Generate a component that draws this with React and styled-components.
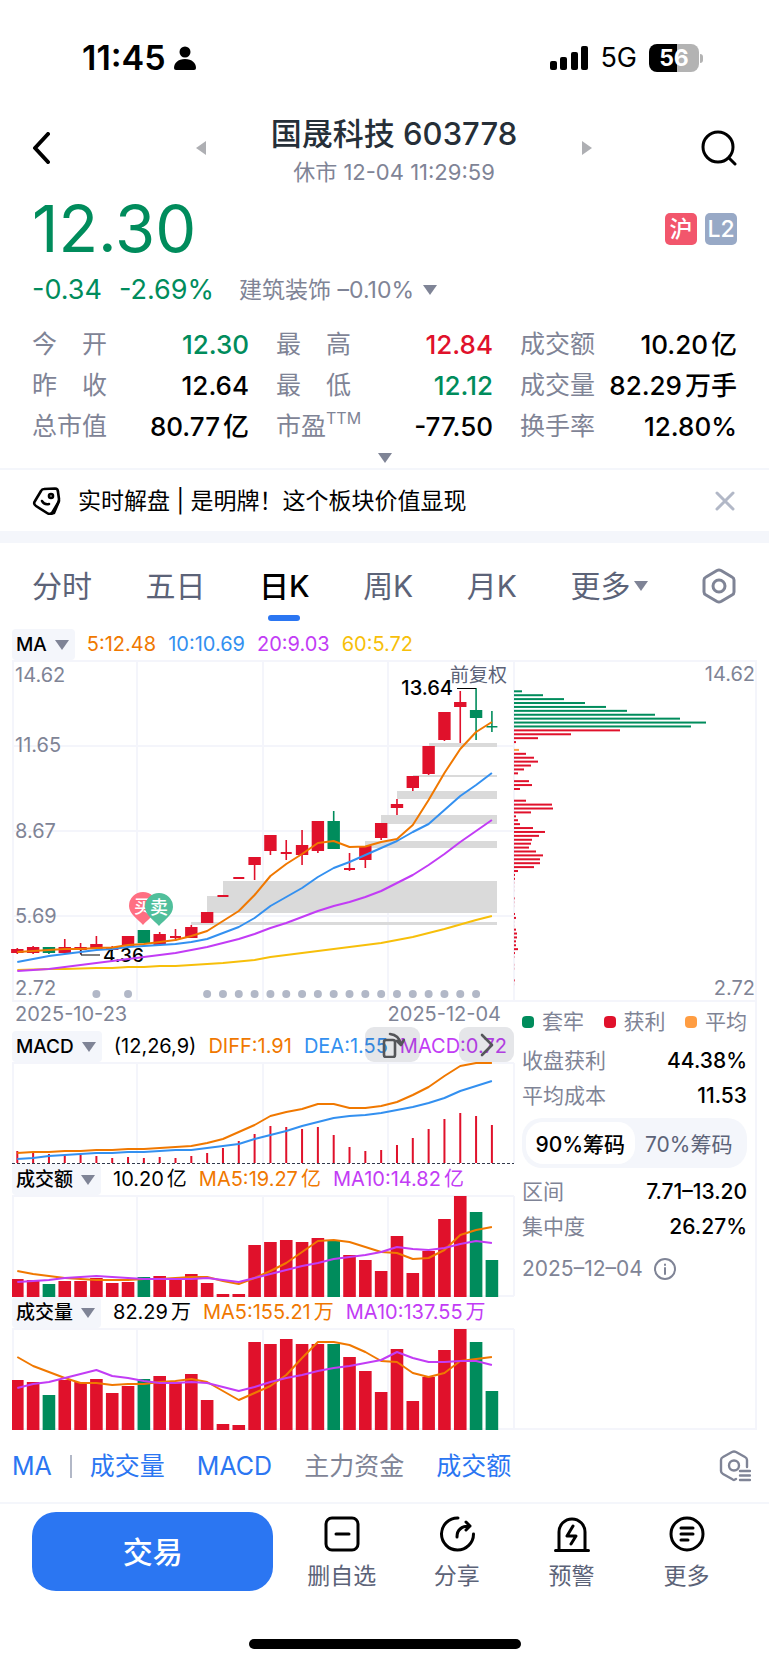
import React, { useState } from 'react';
import styled, { createGlobalStyle, ThemeProvider } from 'styled-components';

const theme = {
  fontFamily: 'Inter, "Noto Sans CJK SC", sans-serif',
  colors: {
    up: '#e0112b',
    down: '#008c5c',
    text: '#000000',
    title: '#262f38',
    tab: '#5c6378',
    muted: '#7f8496',
    faint: '#b2b8c7',
    line: '#f4f5fb',
    surface: '#f4f6fb',
    primary: '#2b76f2',
    orange: '#f07800',
    blue: '#3390f0',
    purple: '#c23cf5',
    yellow: '#f7bf0a',
    average: '#ff9d42',
    gap: '#dadada',
  },
};

const c = theme.colors;

const GlobalStyle = createGlobalStyle`
  * { box-sizing: border-box; }
  body { margin: 0; background: #fff; }
  button { border: 0; padding: 0; margin: 0; background: none; font: inherit; color: inherit; cursor: pointer; }
  dl, dt, dd, h1, p { margin: 0; font-weight: inherit; }
  svg { display: block; }
`;

const Page = styled.div`
  font-family: ${props => props.theme.fontFamily};
  color: ${props => props.theme.colors.text};
  background: #fff;
`;

/* status bar */

const StatusBar = styled.div`
  display: flex;
  align-items: center;
  justify-content: space-between;
  height: 110px;
  padding: 6px 66px 0 82px;
`;

const StatusGroup = styled.div`
  display: flex;
  align-items: center;
  gap: ${props => props.$gap}px;
`;

const Time = styled.span`
  font-size: 34px;
  line-height: 40px;
  font-weight: 600;
`;

const Network = styled.span`
  font-size: 27px;
  line-height: 40px;
`;

const Battery = styled.div`
  display: flex;
  align-items: center;
  gap: 1px;
`;

const BatteryBody = styled.div`
  width: 50px;
  height: 28px;
  border-radius: 8px;
  background: linear-gradient(to right, #000 56%, #b3b3b3 56%);
  color: #fff;
  font-size: 23px;
  line-height: 28px;
  font-weight: 700;
  text-align: center;
`;

const BatteryTip = styled.div`
  width: 3px;
  height: 9px;
  border-radius: 0 4px 4px 0;
  background: #b3b3b3;
`;

/* header */

const Header = styled.header`
  display: grid;
  grid-template-columns: 164px 1fr 145px;
  align-items: center;
  padding: 0 32px;
`;

const Switcher = styled.div`
  display: flex;
  align-items: center;
  justify-content: space-between;
`;

const TitleBlock = styled.div`
  text-align: center;
`;

const Title = styled.h1`
  font-size: 31px;
  line-height: 48px;
  font-weight: 500;
  color: ${props => props.theme.colors.title};
`;

const SubTitle = styled.p`
  font-size: 22px;
  line-height: 28px;
  color: ${props => props.theme.colors.muted};
`;

const SearchButton = styled.button`
  justify-self: end;
`;

/* quote */

const Quote = styled.section`
  padding: 0 32px;
`;

const PriceRow = styled.div`
  display: flex;
  align-items: center;
  justify-content: space-between;
`;

const Price = styled.div`
  font-size: 65px;
  line-height: 86px;
  color: ${props => props.theme.colors.down};
`;

const Badges = styled.div`
  display: flex;
  gap: 8px;
`;

const Badge = styled.span`
  width: 32px;
  height: 32px;
  border-radius: 5px;
  background: ${props => props.$color};
  color: #fff;
  font-size: 23px;
  line-height: 32px;
  font-weight: 500;
  text-align: center;
`;

const ChangeRow = styled.div`
  display: flex;
  align-items: center;
  gap: 17px;
  font-size: 27px;
  line-height: 36px;
  color: ${props => props.theme.colors.down};
`;

const Sector = styled.button`
  display: flex;
  align-items: center;
  gap: 9px;
  padding-left: 8px;
  font-size: 23px;
  color: ${props => props.theme.colors.muted};
`;

const Stats = styled.dl`
  display: grid;
  grid-template-columns: repeat(3, 1fr);
  column-gap: 27px;
  padding-top: 16px;
`;

const Stat = styled.div`
  display: flex;
  justify-content: space-between;
  line-height: 41px;
  font-size: 25px;
  white-space: pre;
`;

const StatLabel = styled.dt`
  display: flex;
  color: ${props => props.theme.colors.muted};
`;

const Sup = styled.sup`
  font-size: 16px;
  line-height: 24px;
`;

const StatValue = styled.dd`
  font-size: 26px;
  font-weight: 500;
  color: ${props => props.$color || props.theme.colors.text};
`;

const Unit = styled.span`
  margin-left: 3px;
`;

const ExpandButton = styled.button`
  display: flex;
  align-items: center;
  justify-content: center;
  width: 100%;
  height: 21px;
`;

const Triangle = styled.i`
  width: 0;
  height: 0;
  border: 7px solid transparent;
  border-top: 10px solid ${props => props.theme.colors.muted};
  border-bottom: 0;
`;

/* news */

const News = styled.div`
  display: flex;
  align-items: center;
  gap: 17px;
  height: 75px;
  padding: 0 34px 0 32px;
  border-top: 2px solid ${props => props.theme.colors.surface};
  border-bottom: 12px solid ${props => props.theme.colors.surface};
`;

const NewsText = styled.a`
  flex: 1;
  font-size: 23px;
  line-height: 32px;
  color: inherit;
  text-decoration: none;
`;

/* period tabs */

const Tabs = styled.nav`
  display: flex;
  align-items: center;
  justify-content: space-between;
  height: 86px;
  padding: 0 33px 0 32px;
`;

const Tab = styled.button`
  position: relative;
  display: flex;
  align-items: center;
  gap: 4px;
  height: 70px;
  font-size: 30px;
  line-height: 40px;
  font-weight: ${props => (props.$active ? 500 : 400)};
  color: ${props => (props.$active ? props.theme.colors.text : props.theme.colors.tab)};

  &::after {
    content: '';
    display: ${props => (props.$active ? 'block' : 'none')};
    position: absolute;
    left: 50%;
    bottom: 0;
    width: 32px;
    height: 6px;
    margin-left: -16px;
    border-radius: 3px;
    background: ${props => props.theme.colors.primary};
  }
`;

/* charts */

const ChartGrid = styled.main`
  display: grid;
  grid-template-columns: 502fr 243fr;
  padding: 0 12px;
`;

const MainColumn = styled.div`
  min-width: 0;
`;

const ChipColumn = styled.div`
  display: flex;
  flex-direction: column;
  padding-top: 31px;
`;

const Legend = styled.div`
  position: relative;
  display: flex;
  align-items: center;
  gap: 12px;
  height: 31px;
  font-size: 20px;
  line-height: 31px;
  white-space: nowrap;
`;

const IndicatorButton = styled.button`
  display: flex;
  align-items: center;
  gap: 8px;
  height: 31px;
  padding: 0 6px 0 4px;
  border-radius: 4px;
  background: ${props => props.theme.colors.surface};
  font-size: 19px;
  font-weight: 500;
`;

const LegendItem = styled.span`
  color: ${props => props.$color || props.theme.colors.text};
`;

const Overlay = styled.div`
  position: absolute;
  right: 0;
  top: -4px;
  display: flex;
  gap: 39px;
`;

const OverlayButton = styled.button`
  display: flex;
  align-items: center;
  justify-content: center;
  width: 55px;
  height: 35px;
  border-radius: 9px;
  background: rgba(70, 78, 98, 0.14);
`;

const Dates = styled.div`
  display: flex;
  justify-content: space-between;
  padding: 0 13px 4px 3px;
  font-size: 20px;
  line-height: 25px;
  color: ${props => props.theme.colors.muted};
`;

const Chart = styled.svg`
  width: 100%;
  height: auto;
  overflow: visible;
  font-family: ${props => props.theme.fontFamily};
`;

/* chip distribution panel */

const ChipPanel = styled.section`
  flex: 1;
  padding: 2px 8px 0;
  border: solid ${props => props.theme.colors.line};
  border-width: 0 2px 2px 0;
`;

const Keys = styled.div`
  display: flex;
  justify-content: space-between;
  margin-bottom: 3px;
  font-size: 21px;
  line-height: 36px;
  color: ${props => props.theme.colors.muted};
`;

const Key = styled.span`
  display: flex;
  align-items: center;
  gap: 8px;

  &::before {
    content: '';
    width: 12px;
    height: 12px;
    border-radius: 4px;
    background: ${props => props.$color};
  }
`;

const ChipRow = styled.div`
  display: flex;
  justify-content: space-between;
  font-size: 21px;
  line-height: 35px;
  color: ${props => props.theme.colors.muted};
`;

const ChipValue = styled.span`
  font-weight: 500;
  color: ${props => props.theme.colors.text};
`;

const Segment = styled.div`
  display: flex;
  height: 50px;
  margin: 5px 0 6px;
  padding: 4px;
  border-radius: 20px;
  background: ${props => props.theme.colors.surface};
`;

const SegmentButton = styled.button`
  flex: 1;
  border-radius: 17px;
  font-size: 21px;
  white-space: nowrap;
  font-weight: ${props => (props.$active ? 500 : 400)};
  color: ${props => (props.$active ? props.theme.colors.text : props.theme.colors.tab)};
  background: ${props => (props.$active ? '#fff' : 'none')};
`;

const ChipDate = styled.div`
  display: flex;
  align-items: center;
  gap: 11px;
  margin-top: 7px;
  font-size: 21px;
  line-height: 36px;
  color: ${props => props.theme.colors.muted};
`;

/* indicator bar */

const IndicatorBar = styled.div`
  display: flex;
  align-items: center;
  gap: 32px;
  height: 74px;
  padding: 0 18px 0 12px;
  border-bottom: 2px solid ${props => props.theme.colors.surface};
  font-size: 25px;
  line-height: 36px;

  & > :last-child {
    margin-left: auto;
  }
`;

const IndicatorMain = styled.div`
  display: flex;
  align-items: center;
  gap: 18px;
`;

const IndicatorItem = styled.button`
  color: ${props => (props.$on ? props.theme.colors.primary : props.theme.colors.muted)};
`;

const Separator = styled.i`
  width: 2px;
  height: 23px;
  background: ${props => props.theme.colors.faint};
`;

/* bottom bar */

const BottomBar = styled.footer`
  display: flex;
  align-items: flex-start;
  gap: 11px;
  padding: 8px 25px 0 32px;
`;

const TradeButton = styled.button`
  flex: 242;
  height: 79px;
  padding-bottom: 4px;
  border-radius: 24px;
  background: ${props => props.theme.colors.primary};
  color: #fff;
  font-size: 30px;
  font-weight: 500;
`;

const Actions = styled.div`
  flex: 461;
  display: grid;
  grid-template-columns: repeat(4, 1fr);
`;

const Action = styled.button`
  display: flex;
  flex-direction: column;
  align-items: center;
  gap: 6px;
  padding-top: 4px;
  font-size: 23px;
  line-height: 36px;
  color: ${props => props.theme.colors.tab};
`;

const HomeIndicator = styled.div`
  width: 272px;
  height: 10px;
  margin: 45px auto 16px;
  border-radius: 5px;
  background: #000;
`;

const STEP = 15.82;
const dayX = i => 5.3 + i * STEP;
const greenDays = [2, 8, 20, 29, 30];
const dayColor = i => (greenDays.includes(i) ? c.down : c.up);

// body top, body bottom, wick top, wick bottom
const candles = [
  [289, 293, 288, 294], [287, 293, 286, 294], [287, 293, 287, 294], [287, 293, 279, 293],
  [287, 290, 283, 294], [284, 289, 276, 289], [287, 290, 286, 291], [276, 286, 276, 286],
  [270, 283, 270, 283], [274, 285, 272, 286], [276, 278, 269, 281], [267, 278, 265, 278],
  [252, 263, 252, 263], [235, 237, 235, 237], [217, 219, 217, 219], [197, 205, 197, 220],
  [175, 191, 175, 195], [192, 194, 180, 200], [185, 195, 170, 205], [161, 191, 161, 193],
  [161, 189, 151, 189], [208, 210, 193, 211], [186, 200, 186, 208], [163, 178, 163, 180],
  [144, 148, 139, 155], [116, 128, 116, 131], [86, 114, 86, 115], [52, 80, 52, 81],
  [42, 47, 31, 83], [50, 58, 28, 80], [66, 67.500, 51, 72],
];

const ma5 = [292, 291, 290, 289, 289, 288, 287.5, 285, 284, 282, 280, 276, 271, 261, 251, 235, 216, 204, 194, 183, 181, 187, 186.5, 182, 179, 165, 140, 113, 89, 72, 62];
const ma10 = [302, 299, 296, 294, 292, 290, 289, 287, 286, 285, 284, 282, 279, 273, 267, 258, 246, 237, 228, 217, 208, 202, 195, 188, 181, 172, 164, 150, 136, 125, 113];
const ma20 = [311, 310, 309, 307, 305, 303, 301, 299, 297, 295, 293, 290, 287, 283, 279, 274, 268, 263, 257, 251, 246, 242, 237, 231, 223, 215, 205, 194, 182, 171, 160];
const ma60 = [310, 309.5, 309, 309, 308.5, 308, 308, 307, 307, 306, 306, 305, 304, 303, 301.5, 300, 297, 295, 293, 291, 289, 287, 285, 283, 280, 277, 273, 269, 264.5, 260, 256];

// left edge, top, height
const gaps = [
  [179, 262, 3], [195, 236, 17], [211, 221, 32], [353, 181, 7], [369, 155, 9],
  [385, 131, 8], [401, 115, 2], [417, 83, 4],
];

const eventDays = [5, 7, ...Array.from({ length: 18 }, (_, i) => i + 12)];

const priceLabels = [
  { y: 22, text: '14.62' },
  { y: 92, text: '11.65' },
  { y: 178, text: '8.67' },
  { y: 263, text: '5.69' },
  { y: 335, text: '2.72' },
];

const diff = [91, 90, 90, 89, 89, 88, 88, 87, 87, 86, 85, 84, 81, 77, 70, 63, 54, 50, 47, 42, 42, 46, 46, 44, 40, 33, 25, 14, 4, 1, 1];
const dea = [97, 96, 94, 93, 92, 91, 91, 90, 90, 89, 88, 88, 86, 84, 82, 77, 73, 69, 64, 60, 56, 54, 53, 51, 48, 45, 41, 36, 29, 24, 19];
const macd = [12, 11, 9, 8, 8, 7, 5, 6, 5, 6, 5, 7, 10, 15, 22, 29, 37, 36, 34, 36, 28, 16, 12, 13, 18, 25, 34, 44, 50, 47, 38];

const turnover = {
  bars: [18, 17, 13, 16, 16, 19, 14, 15, 20, 21, 19, 23, 14, 3, 3, 52, 55, 57, 55, 59, 57, 42, 37, 26, 61, 24, 46, 78, 101, 85, 37],
  ma5: [76, 79, 81, 83, 84, 85, 85, 85, 84, 84, 83, 82, 82, 86, 89, 83, 76, 68, 57, 46, 45, 47, 52, 57, 58, 64, 63, 55, 40, 35, 32],
  ma10: [87, 86, 85, 83, 82, 81, 82, 83, 84, 84, 84, 84, 83, 85, 87, 83, 79, 75, 71, 68, 64, 62, 60, 57, 52, 54, 55, 53, 49, 46, 48],
};

const volume = {
  bars: [50, 48, 35, 50, 48, 51, 37, 44, 51, 54, 48, 56, 30, 6, 5, 88, 86, 91, 86, 86, 86, 73, 59, 38, 81, 29, 53, 80, 101, 88, 39],
  ma5: [29, 38, 44, 50, 55, 55, 57, 56, 56, 54, 53, 51, 54, 63, 72, 65, 58, 47, 30, 14, 14, 17, 24, 33, 34, 45, 49, 45, 33, 31, 29],
  ma10: [60, 56, 54, 50, 46, 42, 48, 50, 53, 55, 55, 54, 55, 59, 63, 59, 54, 50, 47, 43, 40, 38, 35, 32, 24, 30, 34, 34, 33, 33, 37],
};

// chips held at each price level, highest price first
const chips = [
  8, 29, 50, 71, 92, 113, 141, 166, 192, 177, 106, 57, 24, 2, 0, 5, 12, 20, 24, 17, 10, 4, 0, 15, 18, 6, 0, 0,
  12, 38, 39, 17, 2, 4, 6, 19, 31, 25, 18, 17, 15, 22, 29, 26, 26, 20, 4, 1, 1, 0.2, 0.1, 0.1, 0, 0.6, 0.2,
  0.1, 0, 1, 2, 0.1, 0.1, 2, 3, 3, 2, 2, 4, 1, 0.3, 0, 0.2, 0.2, 0, 0, 0.7, 0.1,
];
const chipColor = i => (i < 10 ? c.down : i === 15 ? c.average : c.up);

const stats = [
  { label: '今　开', value: '12.30', color: c.down },
  { label: '最　高', value: '12.84', color: c.up },
  { label: '成交额', value: '10.20', unit: '亿' },
  { label: '昨　收', value: '12.64' },
  { label: '最　低', value: '12.12', color: c.down },
  { label: '成交量', value: '82.29', unit: '万手' },
  { label: '总市值', value: '80.77', unit: '亿' },
  { label: '市盈', sup: 'TTM', value: '-77.50' },
  { label: '换手率', value: '12.80%' },
];

const tabs = ['分时', '五日', '日K', '周K', '月K', '更多'];

function Line({ data, color }) {
  const points = data.map((y, i) => `${dayX(i)},${y}`).join(' ');
  return <polyline points={points} fill="none" stroke={color} strokeWidth="2" strokeLinejoin="round" />;
}

function Frame({ height, rows = [], dashed }) {
  return (
    <g stroke={c.line} strokeWidth="2">
      {[1, 125, 251, 376, 502].map(x => <path key={x} d={`M${x} 1V${height - 1}`} />)}
      {[1, ...rows].map(y => <path key={y} d={`M0 ${y}H502`} />)}
      {dashed
        ? <path d={`M0 ${height - 0.5}H502`} stroke="#333a4d" strokeWidth="1" strokeDasharray="3 2" />
        : <path d={`M0 ${height - 1}H502`} />}
    </g>
  );
}

function Pin({ x, y, color, text }) {
  return (
    <g>
      <path
        d={`M${x} ${y + 33}C${x - 5} ${y + 27} ${x - 14} ${y + 22} ${x - 14} ${y + 14}A14 14 0 0 1 ${x + 14} ${y + 14}C${x + 14} ${y + 22} ${x + 5} ${y + 27} ${x} ${y + 33}Z`}
        fill={color}
      />
      <text x={x} y={y + 21} fontSize="18" fontWeight="500" fill="#fff" textAnchor="middle">{text}</text>
    </g>
  );
}

function CandleChart() {
  return (
    <Chart viewBox="0 0 502 342" role="img" aria-label="日K">
      <Frame height={342} rows={[86, 171, 256]} />
      {gaps.map(([x, y, h]) => <rect key={x} x={x} y={y} width={485 - x} height={h} fill={c.gap} />)}
      {priceLabels.map(l => <text key={l.y} x="3" y={l.y} fontSize="20" fill={c.muted}>{l.text}</text>)}
      <Pin x={131} y={232} color="#ff6f82" text="买" />
      <Pin x={147} y={233} color="#50bf9b" text="卖" />
      {candles.map(([top, bottom, high, low], i) => {
        const flat = bottom - top < 3;
        const w = flat ? 11 : 12.4;
        return (
          <g key={i} fill={dayColor(i)}>
            <rect x={dayX(i) - 0.8} y={high} width="1.6" height={low - high} />
            <rect x={dayX(i) - w / 2} y={top} width={w} height={bottom - top} />
          </g>
        );
      })}
      {eventDays.map(i => <circle key={i} cx={dayX(i)} cy="334" r="4" fill={c.faint} />)}
      <text x="91" y="302" fontSize="19" fontWeight="500">4.36</text>
      <path d="M69 290V295H88" fill="none" stroke="#000" />
      <Line data={ma60} color={c.yellow} />
      <Line data={ma20} color={c.purple} />
      <Line data={ma10} color={c.blue} />
      <Line data={ma5} color={c.orange} />
      <text x="495" y="22" fontSize="19" fill={c.tab} textAnchor="end">前复权</text>
      <text x="441" y="35" fontSize="20" fontWeight="500" textAnchor="end">13.64</text>
      <path d="M445 28.5H464" stroke="#000" />
    </Chart>
  );
}

function ChipChart() {
  return (
    <Chart viewBox="0 0 243 342" role="img" aria-label="筹码分布">
      <path d="M0 1H242V341H0" fill="none" stroke={c.line} strokeWidth="2" />
      {chips.map((w, i) => (
        <rect key={i} x="0" y={30.3 + i * 3.907} width={w} height="2" fill={chipColor(i)} />
      ))}
      <text x="241" y="21" fontSize="20" fill={c.muted} textAnchor="end">14.62</text>
      <text x="241" y="335" fontSize="20" fill={c.muted} textAnchor="end">2.72</text>
    </Chart>
  );
}

function MacdChart() {
  return (
    <Chart viewBox="0 0 502 102" role="img" aria-label="MACD">
      <Frame height={102} dashed />
      {macd.map((h, i) => <rect key={i} x={dayX(i) - 1} y={101 - h} width="2" height={h} fill={c.up} />)}
      <Line data={dea} color={c.blue} />
      <Line data={diff} color={c.orange} />
    </Chart>
  );
}

function BarChart({ data, label }) {
  return (
    <Chart viewBox="0 0 502 102" role="img" aria-label={label}>
      <Frame height={102} />
      {data.bars.map((h, i) => {
        const x = Math.max(0, dayX(i) - 6.3);
        return <rect key={i} x={x} y={102 - h} width={dayX(i) + 6.3 - x} height={h} fill={dayColor(i)} />;
      })}
      <Line data={data.ma5} color={c.orange} />
      <Line data={data.ma10} color={c.purple} />
    </Chart>
  );
}

function Glyph({ width, height, size, children, color = '#000', stroke = 3 }) {
  return (
    <svg
      width={width || size}
      height={height || size}
      viewBox={`0 0 ${width || size} ${height || size}`}
      fill="none"
      stroke={color}
      strokeWidth={stroke}
      strokeLinecap="round"
      strokeLinejoin="round"
      aria-hidden="true"
    >
      {children}
    </svg>
  );
}

const actions = [
  {
    text: '删自选',
    icon: <><rect x="2" y="2" width="32" height="32" rx="6" /><path d="M12 18H25" /></>,
  },
  {
    text: '分享',
    icon: <><path d="M19 2A16 16 0 1 0 34.500 18" /><path d="M18 21C18 14 22 10 31 10M27 6L31 10L27 14" /></>,
  },
  {
    text: '预警',
    icon: <><path d="M5 34V16A13 13 0 0 1 31 16V34M1.500 34.500H34.500" /><path d="M19 10L13 20H22L17 28" /></>,
  },
  {
    text: '更多',
    icon: <><circle cx="18" cy="18" r="16" /><path d="M12 12H24M12 18H24M12 24H19" /></>,
  },
];

export default function App() {
  const [tab, setTab] = useState('日K');
  const [range, setRange] = useState('90%筹码');

  return (
    <ThemeProvider theme={theme}>
      <GlobalStyle />
      <Page>
        <StatusBar>
          <StatusGroup $gap={8}>
            <Time>11:45</Time>
            <svg width="22" height="24" viewBox="0 0 22 24" aria-hidden="true">
              <circle cx="11" cy="6" r="5.500" />
              <path d="M0 22C0 17 4 13 11 13S22 17 22 22Q22 24 20 24H2Q0 24 0 22Z" />
            </svg>
          </StatusGroup>
          <StatusGroup $gap={12}>
            <svg width="38" height="24" viewBox="0 0 38 24" aria-hidden="true">
              <rect x="0" y="15" width="7" height="9" rx="2" />
              <rect x="10" y="11" width="7" height="13" rx="2" />
              <rect x="21" y="6" width="7" height="18" rx="2" />
              <rect x="31" y="0" width="7" height="24" rx="2" />
            </svg>
            <Network>5G</Network>
            <Battery>
              <BatteryBody>56</BatteryBody>
              <BatteryTip />
            </Battery>
          </StatusGroup>
        </StatusBar>

        <Header>
          <button aria-label="返回">
            <Glyph width={18} height={32} stroke={4}><path d="M16 2L3 16L16 30" /></Glyph>
          </button>
          <Switcher>
            <button aria-label="上一只">
              <svg width="10" height="14" viewBox="0 0 10 14"><path d="M10 0V14L0 7Z" fill="#aeafb3" /></svg>
            </button>
            <TitleBlock>
              <Title>国晟科技 603778</Title>
              <SubTitle>休市 12-04 11:29:59</SubTitle>
            </TitleBlock>
            <button aria-label="下一只">
              <svg width="10" height="14" viewBox="0 0 10 14"><path d="M0 0V14L10 7Z" fill="#aeafb3" /></svg>
            </button>
          </Switcher>
          <SearchButton aria-label="搜索">
            <Glyph size={36}><circle cx="17" cy="17" r="15" /><path d="M28 28L34 34" /></Glyph>
          </SearchButton>
        </Header>

        <Quote>
          <PriceRow>
            <Price>12.30</Price>
            <Badges>
              <Badge $color="#f2566c">沪</Badge>
              <Badge $color="#98a9c6">L2</Badge>
            </Badges>
          </PriceRow>
          <ChangeRow>
            <span>-0.34</span>
            <span>-2.69%</span>
            <Sector>建筑装饰 –0.10%<Triangle /></Sector>
          </ChangeRow>
          <Stats>
            {stats.map(s => (
              <Stat key={s.label}>
                <StatLabel>{s.label}{s.sup && <Sup>{s.sup}</Sup>}</StatLabel>
                <StatValue $color={s.color}>{s.value}{s.unit && <Unit>{s.unit}</Unit>}</StatValue>
              </Stat>
            ))}
          </Stats>
          <ExpandButton aria-label="展开"><Triangle /></ExpandButton>
        </Quote>

        <News>
          <Glyph width={29} height={28} stroke={2.6}>
            <path d="M12 2L23 1.500Q26 1.500 26 5L27 12Q27 14 26 16L20 26Q18 28 15 26L4 19Q1 17 3 14L9 4Q10 2 12 2Z" />
            <path d="M27 14L22 26L18 27" />
            <circle cx="19" cy="9" r="2" />
            <path d="M10 14Q12 18 17 17" />
          </Glyph>
          <NewsText href="#">实时解盘 | 是明牌！这个板块价值显现</NewsText>
          <button aria-label="关闭">
            <Glyph size={20} color={c.faint}><path d="M2 2L18 18M18 2L2 18" /></Glyph>
          </button>
        </News>

        <Tabs>
          {tabs.map(t => (
            <Tab key={t} $active={t === tab} onClick={() => setTab(t)}>
              {t}
              {t === '更多' && <Triangle />}
            </Tab>
          ))}
          <button aria-label="设置">
            <Glyph width={34} height={36} color={c.muted}>
              <path d="M15 2.500Q17 1.500 19 2.500L30 9Q32 10 32 12V24Q32 26 30 27L19 33.500Q17 34.500 15 33.500L4 27Q2 26 2 24V12Q2 10 4 9Z" />
              <circle cx="17" cy="18" r="6" />
            </Glyph>
          </button>
        </Tabs>

        <ChartGrid>
          <MainColumn>
            <Legend>
              <IndicatorButton>MA<Triangle /></IndicatorButton>
              <LegendItem $color={c.orange}>5:12.48</LegendItem>
              <LegendItem $color={c.blue}>10:10.69</LegendItem>
              <LegendItem $color={c.purple}>20:9.03</LegendItem>
              <LegendItem $color={c.yellow}>60:5.72</LegendItem>
            </Legend>
            <CandleChart />
            <Dates>
              <span>2025-10-23</span>
              <span>2025-12-04</span>
            </Dates>

            <Legend>
              <IndicatorButton>MACD<Triangle /></IndicatorButton>
              <LegendItem>(12,26,9)</LegendItem>
              <LegendItem $color={c.orange}>DIFF:1.91</LegendItem>
              <LegendItem $color={c.blue}>DEA:1.55</LegendItem>
              <LegendItem $color={c.purple}>MACD:0.72</LegendItem>
              <Overlay>
                <OverlayButton aria-label="横屏">
                  <Glyph width={24} height={26} color="#55565a" stroke={2.6}>
                    <rect x="3" y="8" width="11" height="17" rx="2" />
                    <path d="M9 2Q18 3 20 12M16 9L20 13L23 8" />
                  </Glyph>
                </OverlayButton>
                <OverlayButton aria-label="收起">
                  <Glyph width={14} height={24} color="#55565a" stroke={2.6}><path d="M2 2L12 12L2 22" /></Glyph>
                </OverlayButton>
              </Overlay>
            </Legend>
            <MacdChart />

            <Legend>
              <IndicatorButton>成交额<Triangle /></IndicatorButton>
              <LegendItem>10.20<Unit>亿</Unit></LegendItem>
              <LegendItem $color={c.orange}>MA5:19.27<Unit>亿</Unit></LegendItem>
              <LegendItem $color={c.purple}>MA10:14.82<Unit>亿</Unit></LegendItem>
            </Legend>
            <BarChart data={turnover} label="成交额" />

            <Legend>
              <IndicatorButton>成交量<Triangle /></IndicatorButton>
              <LegendItem>82.29<Unit>万</Unit></LegendItem>
              <LegendItem $color={c.orange}>MA5:155.21<Unit>万</Unit></LegendItem>
              <LegendItem $color={c.purple}>MA10:137.55<Unit>万</Unit></LegendItem>
            </Legend>
            <BarChart data={volume} label="成交量" />
          </MainColumn>

          <ChipColumn>
            <ChipChart />
            <ChipPanel>
              <Keys>
                <Key $color={c.down}>套牢</Key>
                <Key $color={c.up}>获利</Key>
                <Key $color={c.average}>平均</Key>
              </Keys>
              <ChipRow>收盘获利<ChipValue>44.38%</ChipValue></ChipRow>
              <ChipRow>平均成本<ChipValue>11.53</ChipValue></ChipRow>
              <Segment>
                {['90%筹码', '70%筹码'].map(r => (
                  <SegmentButton key={r} $active={r === range} onClick={() => setRange(r)}>{r}</SegmentButton>
                ))}
              </Segment>
              <ChipRow>区间<ChipValue>7.71–13.20</ChipValue></ChipRow>
              <ChipRow>集中度<ChipValue>26.27%</ChipValue></ChipRow>
              <ChipDate>
                2025–12–04
                <Glyph size={22} color={c.muted} stroke={2}>
                  <circle cx="11" cy="11" r="10" />
                  <path d="M11 10V16M11 6.500V7" />
                </Glyph>
              </ChipDate>
            </ChipPanel>
          </ChipColumn>
        </ChartGrid>

        <IndicatorBar>
          <IndicatorMain>
            <IndicatorItem $on>MA</IndicatorItem>
            <Separator />
            <IndicatorItem $on>成交量</IndicatorItem>
          </IndicatorMain>
          <IndicatorItem $on>MACD</IndicatorItem>
          <IndicatorItem>主力资金</IndicatorItem>
          <IndicatorItem $on>成交额</IndicatorItem>
          <button aria-label="指标设置">
            <Glyph width={32} height={32} color={c.muted} stroke={2.4}>
              <path d="M17 29L15 30Q14 30 13 29L4 24Q2 23 2 21V10Q2 8 4 7L13 2Q15 1 17 2L26 7Q28 8 28 10V17" />
              <circle cx="15" cy="15.500" r="5" />
              <path d="M21 21H31M21 25.500H31M21 30H31" />
            </Glyph>
          </button>
        </IndicatorBar>

        <BottomBar>
          <TradeButton>交易</TradeButton>
          <Actions>
            {actions.map(a => (
              <Action key={a.text}>
                <Glyph size={36}>{a.icon}</Glyph>
                {a.text}
              </Action>
            ))}
          </Actions>
        </BottomBar>
        <HomeIndicator />
      </Page>
    </ThemeProvider>
  );
}
